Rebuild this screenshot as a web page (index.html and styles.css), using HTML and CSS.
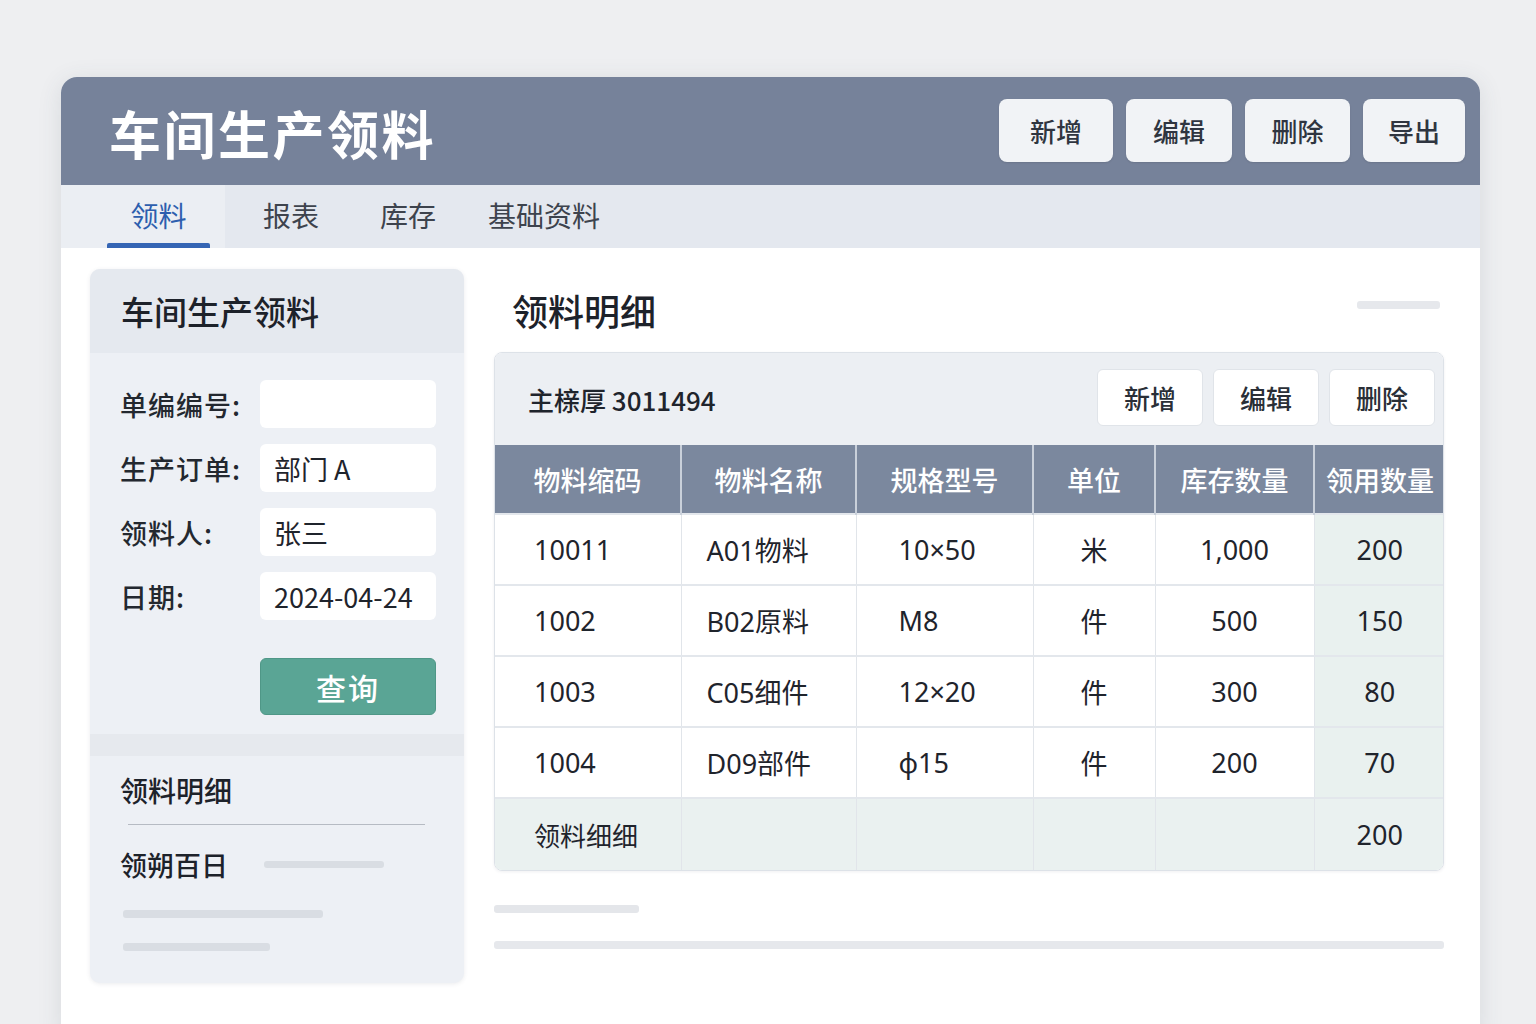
FILE: index.html
```html
<!DOCTYPE html>
<html lang="zh-CN">
<head>
<meta charset="utf-8">
<title>车间生产领料</title>
<link rel="stylesheet" href="styles.css">
</head>
<body>
<div class="window">
  <header class="topbar">
    <h1 class="app-title">车间生产领料</h1>
    <div class="top-actions">
      <button class="top-btn">新增</button>
      <button class="top-btn">编辑</button>
      <button class="top-btn">删除</button>
      <button class="top-btn">导出</button>
    </div>
  </header>
  <nav class="tabs">
    <div class="tab active">领料</div>
    <div class="tab t2">报表</div>
    <div class="tab t3">库存</div>
    <div class="tab t4">基础资料</div>
  </nav>
  <main class="content">
    <aside class="side">
      <div class="side-head">车间生产领料</div>
      <div class="form">
        <div class="form-row"><span class="label">单编编号:</span><div class="input"></div></div>
        <div class="form-row"><span class="label">生产订单:</span><div class="input">部门 A</div></div>
        <div class="form-row"><span class="label">领料人:</span><div class="input">张三</div></div>
        <div class="form-row"><span class="label">日期:</span><div class="input">2024-04-24</div></div>
        <div class="form-row"><span class="label"></span><button class="query-btn">查询</button></div>
      </div>
      <div class="side-band"></div>
      <div class="side-sub">
        <div class="sub-title">领料明细</div>
        <div class="sub-line"></div>
        <div class="sub-row"><span>领朔百日</span><span class="bar bar-a"></span></div>
        <div class="bar bar-b"></div>
        <div class="bar bar-c"></div>
      </div>
    </aside>
    <section class="main">
      <div class="main-head">
        <h2 class="main-title">领料明细</h2>
        <span class="bar bar-top"></span>
      </div>
      <div class="table-card">
        <div class="toolbar">
          <span class="doc-no">主榇厚 3011494</span>
          <div class="tool-actions">
            <button class="tool-btn">新增</button>
            <button class="tool-btn">编辑</button>
            <button class="tool-btn">删除</button>
          </div>
        </div>
        <table class="grid">
          <colgroup>
            <col class="w1"><col class="w2"><col class="w3">
            <col class="w4"><col class="w5"><col class="w6">
          </colgroup>
          <thead>
            <tr><th>物料缩码</th><th>物料名称</th><th>规格型号</th><th>单位</th><th>库存数量</th><th>领用数量</th></tr>
          </thead>
          <tbody>
            <tr><td class="c1">10011</td><td class="c2">A01物料</td><td class="c3">10×50</td><td class="c4">米</td><td class="c5">1,000</td><td class="c6">200</td></tr>
            <tr><td class="c1">1002</td><td class="c2">B02原料</td><td class="c3">M8</td><td class="c4">件</td><td class="c5">500</td><td class="c6">150</td></tr>
            <tr><td class="c1">1003</td><td class="c2">C05细件</td><td class="c3">12×20</td><td class="c4">件</td><td class="c5">300</td><td class="c6">80</td></tr>
            <tr><td class="c1">1004</td><td class="c2">D09部件</td><td class="c3">φ15</td><td class="c4">件</td><td class="c5">200</td><td class="c6">70</td></tr>
            <tr class="total"><td class="c1">领料细细</td><td></td><td></td><td></td><td></td><td class="c6">200</td></tr>
          </tbody>
        </table>
      </div>
      <span class="bar bar-d"></span>
      <span class="bar bar-e"></span>
    </section>
  </main>
</div>
</body>
</html>
```
FILE: styles.css
```css
* { box-sizing: border-box; }
html, body { margin: 0; padding: 0; }
body {
  width: 1536px;
  height: 1024px;
  overflow: hidden;
  background: #eeeff1;
  font-family: "Noto Sans CJK SC", "Noto Sans", sans-serif;
  color: #1f242c;
  padding: 77px 56px 0 61px;
}
button { font-family: inherit; cursor: pointer; }

.window {
  width: 1419px;
  height: 960px;
  background: #ffffff;
  border-radius: 16px 16px 0 0;
  overflow: hidden;
  box-shadow: 0 4px 24px rgba(60, 70, 90, 0.12);
}

.topbar {
  height: 108px;
  background: #76829a;
  display: flex;
  align-items: center;
  justify-content: space-between;
  padding: 0 15px 0 48px;
}
.app-title {
  margin: 0;
  color: #ffffff;
  font-size: 52px;
  font-weight: 700;
  letter-spacing: 2.5px;
  line-height: 1;
  margin-top: 4px;
}
.top-actions { display: flex; gap: 13px; margin-top: -2px; }
.top-btn {
  height: 63px;
  width: 106px;
  border: none;
  border-radius: 8px;
  background: #f1f3f6;
  color: #2f3540;
  font-size: 26px;
  font-weight: 500;
  box-shadow: 0 1px 2px rgba(0,0,0,0.1);
}
.top-btn:first-child { width: 114px; margin-left: 2px; }
.top-btn:nth-child(3) { width: 105px; }
.top-btn:last-child { width: 102px; }

.tabs {
  height: 63px;
  background: #e4e8ef;
  display: flex;
  align-items: stretch;
  padding-left: 46px;
  position: relative;
}
.tabs::before {
  content: "";
  position: absolute;
  left: 0; top: 0; bottom: 0;
  width: 164px;
  background: #ebeef3;
}
.tab {
  position: relative;
  display: flex;
  align-items: center;
  font-size: 28px;
  color: #3d434d;
  padding-bottom: 4px;
}
.tab.t2 { margin-left: 53px; }
.tab.t3 { margin-left: 61px; }
.tab.t4 { margin-left: 52px; }
.tab.active {
  width: 103px;
  justify-content: center;
  color: #2d5eae;
}
.tab.active::after {
  content: "";
  position: absolute;
  left: 0; right: 0; bottom: 0;
  height: 5px;
  background: #3565b4;
  border-radius: 2px 2px 0 0;
}

.content {
  display: flex;
  gap: 30px;
  padding: 21px 36px 0 29px;
}

.side {
  width: 374px;
  height: 714px;
  background: #edf0f5;
  border-radius: 10px;
  box-shadow: 0 1px 4px rgba(60,70,90,0.10);
  overflow: hidden;
  flex-shrink: 0;
}
.side-head {
  height: 84px;
  background: #e5e9ef;
  display: flex;
  align-items: center;
  padding-left: 31px;
  font-size: 33px;
  font-weight: 500;
  color: #1d222a;
}
.form {
  padding: 27px 28px 0 30px;
  display: flex;
  flex-direction: column;
  gap: 16px;
}
.form-row {
  display: flex;
  align-items: center;
  justify-content: space-between;
}
.label { font-size: 27px; color: #23282f; font-weight: 500; letter-spacing: 1px; }
.input {
  width: 176px;
  height: 48px;
  background: #ffffff;
  border-radius: 6px;
  display: flex;
  align-items: center;
  padding-left: 14px;
  font-size: 27px;
  color: #1f242c;
}
.form-row:last-child { margin-top: 22px; }
.query-btn {
  width: 176px;
  height: 57px;
  background: #5aa595;
  border: 1px solid #4f9787;
  border-radius: 6px;
  color: #ffffff;
  font-size: 30px;
  letter-spacing: 2px;
  font-weight: 500;
}
.side-band {
  height: 22px;
  margin-top: 19px;
  background: #e6e9ee;
}
.side-sub { padding: 14px 38px 0 30px; }
.sub-title { font-size: 28px; font-weight: 500; color: #1d222a; }
.sub-line {
  height: 1px;
  background: #b6bbc3;
  margin: 14px 0 0 8px;
  width: 297px;
}
.sub-row {
  display: flex;
  align-items: center;
  gap: 36px;
  margin-top: 20px;
  font-size: 27px;
  font-weight: 500;
  color: #1d222a;
}
.bar { display: block; background: #d9dde3; border-radius: 3px; }
.bar-a { width: 120px; height: 7px; }
.bar-b { width: 200px; height: 8px; margin: 26px 0 0 3px; }
.bar-c { width: 147px; height: 8px; margin: 25px 0 0 3px; }

.main { width: 950px; flex-shrink: 0; }
.main-head {
  height: 83px;
  display: flex;
  align-items: center;
  justify-content: space-between;
  padding-left: 18px;
}
.main-title {
  margin: 0;
  font-size: 36px;
  font-weight: 500;
  color: #1d222a;
  margin-top: -2px;
}
.bar-top { width: 83px; height: 8px; margin-right: 4px; background: #e6e8ec; margin-top: -12px; }

.table-card {
  border: 1px solid #dde2e8;
  border-radius: 8px;
  overflow: hidden;
  box-shadow: 0 1px 3px rgba(60,70,90,0.08);
}
.toolbar {
  height: 92px;
  background: #eceff3;
  display: flex;
  align-items: center;
  justify-content: space-between;
  padding: 0 8px 0 33px;
}
.doc-no { font-size: 26px; color: #1f242c; font-weight: 500; }
.tool-actions { display: flex; gap: 10px; margin-top: -4px; }
.tool-btn {
  width: 106px;
  height: 57px;
  background: #ffffff;
  border: 1px solid #e0e4e9;
  border-radius: 6px;
  font-size: 26px;
  color: #2a2f37;
  font-weight: 500;
}

.grid {
  width: 950px;
  border-collapse: collapse;
  table-layout: fixed;
}
.w1 { width: 186px; } .w2 { width: 175px; } .w3 { width: 177px; }
.w4 { width: 122px; } .w5 { width: 159px; } .w6 { width: 131px; }
.grid th {
  height: 69px;
  background: #7b889e;
  color: #ffffff;
  font-size: 27px;
  font-weight: 500;
  text-align: center;
  border-left: 2px solid #c9d0da;
  padding: 0;
  white-space: nowrap;
}
.grid th:first-child { border-left: none; }
.grid td {
  height: 71px;
  font-family: "Noto Sans", "Noto Sans CJK SC", sans-serif;
  font-size: 27px;
  color: #1f242c;
  border-left: 1px solid #e1e5ea;
  border-top: 2px solid #e3e7ec;
  padding: 0;
  white-space: nowrap;
}
.grid td:first-child { border-left: none; }
.c1 { padding-left: 39px !important; }
.c2 { padding-left: 25px !important; }
.c3 { padding-left: 42px !important; }
.c4, .c5, .c6 { text-align: center; }
.c4 { font-family: "Noto Sans CJK SC", sans-serif !important; }
.c6 { background: #e9f1ef; }
.grid tr.total td { background: #eaf1f0; height: 72px; font-size: 26px; }
.grid tr.total td.c1 { font-family: "Noto Sans CJK SC", sans-serif; }
.grid tr.total td.c6 { font-size: 27px; }

.bar-d { width: 145px; height: 8px; margin-top: 34px; background: #e4e6ea; }
.bar-e { width: 950px; height: 8px; margin-top: 28px; background: #e6e8ec; }
```
